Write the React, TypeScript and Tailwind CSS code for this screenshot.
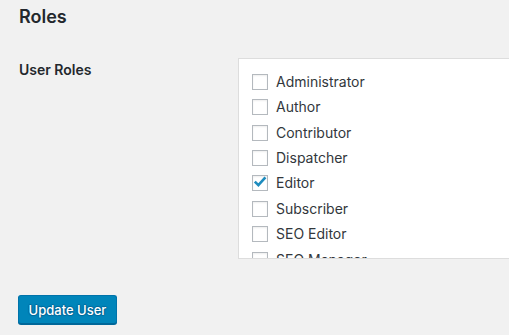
import React from "react";

const roles = [
  { name: "Administrator", checked: false },
  { name: "Author", checked: false },
  { name: "Contributor", checked: false },
  { name: "Dispatcher", checked: false },
  { name: "Editor", checked: true },
  { name: "Subscriber", checked: false },
  { name: "SEO Editor", checked: false },
  { name: "SEO Manager", checked: false },
];

function Checkbox({ checked }: { checked: boolean }) {
  return (
    <span className="relative flex h-4 w-4 shrink-0 items-center justify-center border border-[#b4b9be] bg-white shadow-[inset_0_1px_2px_rgba(0,0,0,0.07)]">
      {checked && (
        <svg width="14" height="14" viewBox="0 0 14 14" className="block">
          <path
            d="M1.8 5.6 L5.4 9.2 L12.4 1.4"
            fill="none"
            stroke="#1e8cbe"
            strokeWidth="2.6"
            strokeLinecap="butt"
            strokeLinejoin="miter"
          />
        </svg>
      )}
    </span>
  );
}

export default function App() {
  return (
    <div
      className="h-[335px] w-[509px] overflow-hidden bg-[#f1f1f1] text-[#23282d]"
      style={{ fontFamily: 'Inter, "Noto Sans", sans-serif' }}
    >
      <div className="pl-[19px] pt-[5px]">
        <h2 className="text-[18px] font-semibold leading-[24px] text-[#23282d]">Roles</h2>
      </div>
      <div className="mt-[29px] flex">
        <div className="w-[238px] shrink-0 pl-[19px] pt-[2px] text-[14px] font-semibold leading-[20px] text-[#23282d]">
          User Roles
        </div>
        <div className="h-[201px] w-[300px] shrink-0 overflow-hidden border border-[#dddddd] bg-white pl-[13px] pt-[10px]">
          {roles.map((r) => (
            <label key={r.name} className="flex h-[25.43px] items-center gap-[8px]">
              <Checkbox checked={r.checked} />
              <span className="text-[14px] leading-[20px] text-[#32373c]">{r.name}</span>
            </label>
          ))}
        </div>
      </div>
      <div className="pl-[18px] pt-[36px]">
        <button className="h-[29px] w-[99px] rounded-[3px] border border-[#0073aa] border-b-[#006799] bg-[#0085ba] text-[13px] font-medium leading-[26px] text-white shadow-[0_1px_0_#006799] [text-shadow:0_-1px_1px_#006799,1px_0_1px_#006799,0_1px_1px_#006799,-1px_0_1px_#006799]">
          Update User
        </button>
      </div>
    </div>
  );
}
